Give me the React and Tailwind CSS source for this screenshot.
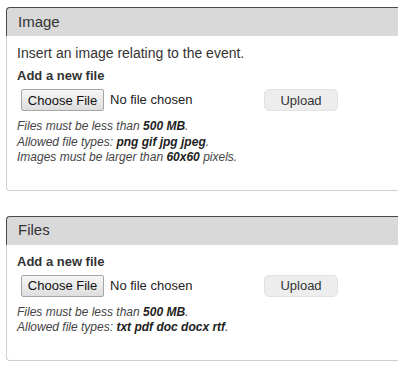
import React from 'react';

const FileRow = () => (
  <div className="flex items-center mt-[4px] ml-[4px]">
    <div className="flex items-center w-[243px]">
      <button className="h-[22px] w-[83px] border border-[#a6a6a6] rounded-[2px] bg-gradient-to-b from-[#f6f6f6] to-[#dedede] text-[13px] text-[#111] leading-none">
        Choose File
      </button>
      <span className="ml-[6px] text-[13px] text-[#222]">No file chosen</span>
    </div>
    <button className="h-[22px] w-[74px] rounded-[5px] border border-[#e2e2e2] bg-[#ededed] text-[13px] text-[#333] leading-none">
      Upload
    </button>
  </div>
);

const Panel = ({ title, children, className }) => (
  <div className={`ml-[6px] w-[420px] rounded-[4px] border-l border-b border-r border-[#cfcfcf] ${className}`}>
    <div className="-ml-px h-[29px] flex items-center px-[11px] bg-[#d9d9d9] border-t border-l border-[#4a4a4a] rounded-tl-[4px] text-[15px] text-[#333]">
      {title}
    </div>
    <div className="pl-[10px] pt-[8px]">{children}</div>
  </div>
);

const App = () => {
  return (
    <div className="w-[398px] h-[370px] overflow-hidden bg-white font-['Liberation_Sans',Arial,sans-serif]">
      <Panel title="Image" className="mt-[7px] pb-[24px]">
        <p className="text-[14px] leading-[18px] text-[#333]">Insert an image relating to the event.</p>
        <p className="mt-[5px] text-[13px] leading-[18px] font-bold text-[#333]">Add a new file</p>
        <FileRow />
        <div className="mt-[8px] text-[12px] leading-[15.5px] italic text-[#444]">
          <p>Files must be less than <strong className="text-[#222]">500 MB</strong>.</p>
          <p>Allowed file types: <strong className="text-[#222]">png gif jpg jpeg</strong>.</p>
          <p>Images must be larger than <strong className="text-[#222]">60x60</strong> pixels.</p>
        </div>
      </Panel>

      <Panel title="Files" className="mt-[25px] pb-[24px]">
        <p className="text-[13px] leading-[18px] font-bold text-[#333]">Add a new file</p>
        <FileRow />
        <div className="mt-[8px] text-[12px] leading-[15.5px] italic text-[#444]">
          <p>Files must be less than <strong className="text-[#222]">500 MB</strong>.</p>
          <p>Allowed file types: <strong className="text-[#222]">txt pdf doc docx rtf</strong>.</p>
        </div>
      </Panel>
    </div>
  );
};

export default App;
